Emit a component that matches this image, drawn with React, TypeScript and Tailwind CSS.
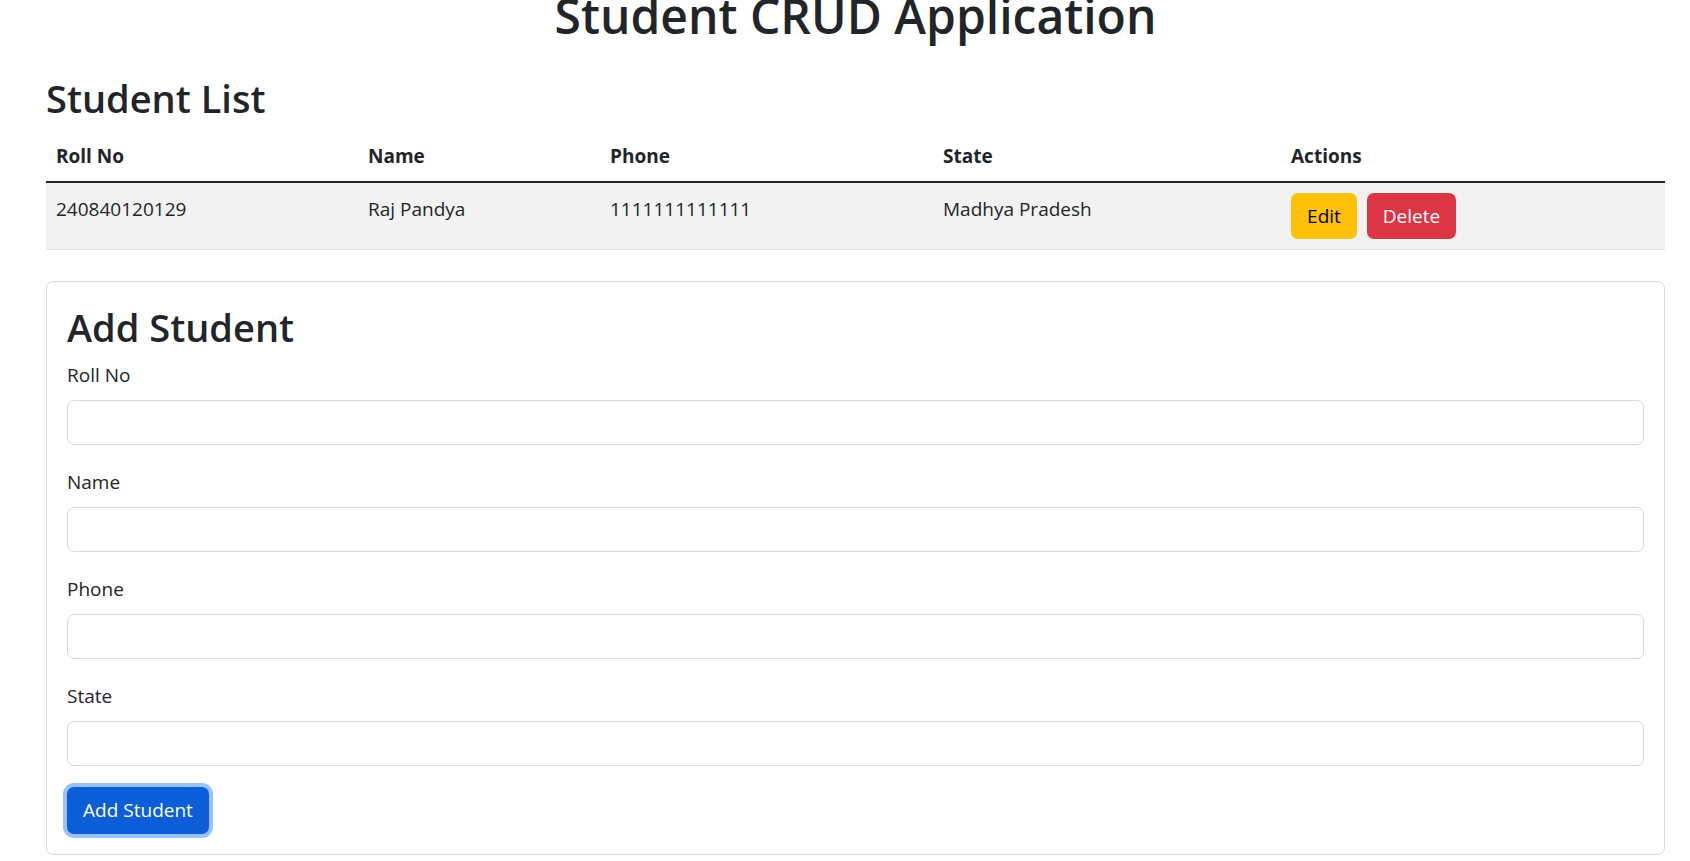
import { useState } from 'react';

type Student = {
  rollNo: string;
  name: string;
  phone: string;
  state: string;
};

const fields: { key: keyof Student; label: string }[] = [
  { key: 'rollNo', label: 'Roll No' },
  { key: 'name', label: 'Name' },
  { key: 'phone', label: 'Phone' },
  { key: 'state', label: 'State' },
];

const emptyForm: Student = { rollNo: '', name: '', phone: '', state: '' };

export default function App() {
  const [students, setStudents] = useState<Student[]>([
    { rollNo: '240840120129', name: 'Raj Pandya', phone: '1111111111111', state: 'Madhya Pradesh' },
  ]);
  const [form, setForm] = useState<Student>(emptyForm);

  const handleAdd = () => {
    if (!form.rollNo) return;
    setStudents((prev) => [...prev, form]);
    setForm(emptyForm);
  };

  const handleDelete = (rollNo: string) => {
    setStudents((prev) => prev.filter((s) => s.rollNo !== rollNo));
  };

  return (
    <div className="min-h-screen bg-white pl-[46px] pr-[25px] text-[#212529] text-[19px] font-['Open_Sans',sans-serif] overflow-hidden">
      <h1 className="-mt-[13px] text-center text-[48px] leading-[58px] font-semibold">Student CRUD Application</h1>

      {/* Student table */}
      <h2 className="mt-[30px] text-[38px] leading-[46px] font-semibold">Student List</h2>
      <table className="mt-[11px] w-full table-fixed border-collapse text-left">
        <thead>
          <tr className="border-b-2 border-[#212529]">
            <th className="w-[312px] px-[10px] pt-[10px] pb-[10px] leading-[29px] font-bold">Roll No</th>
            <th className="w-[242px] px-[10px] pt-[10px] pb-[10px] leading-[29px] font-bold">Name</th>
            <th className="w-[333px] px-[10px] pt-[10px] pb-[10px] leading-[29px] font-bold">Phone</th>
            <th className="w-[348px] px-[10px] pt-[10px] pb-[10px] leading-[29px] font-bold">State</th>
            <th className="px-[10px] pt-[10px] pb-[10px] leading-[29px] font-bold">Actions</th>
          </tr>
        </thead>
        <tbody>
          {students.map((s, i) => (
            <tr key={s.rollNo + i} className={`border-b border-[#dee2e6] ${i % 2 === 0 ? 'bg-[#f2f2f2]' : 'bg-white'}`}>
              <td className="px-[10px] pt-[12px] align-top leading-[29px]">{s.rollNo}</td>
              <td className="px-[10px] pt-[12px] align-top leading-[29px]">{s.name}</td>
              <td className="px-[10px] pt-[12px] align-top leading-[29px]">{s.phone}</td>
              <td className="px-[10px] pt-[12px] align-top leading-[29px]">{s.state}</td>
              <td className="px-[10px] py-[10px] align-top">
                <div className="flex gap-[10px]">
                  <button className="h-[46px] w-[66px] rounded-[7px] bg-[#ffc107] text-black">Edit</button>
                  <button
                    onClick={() => handleDelete(s.rollNo)}
                    className="h-[46px] w-[89px] rounded-[7px] bg-[#dc3545] text-white"
                  >
                    Delete
                  </button>
                </div>
              </td>
            </tr>
          ))}
        </tbody>
      </table>

      {/* Add form card */}
      <div className="mt-[31px] rounded-[7px] border border-[#d9d9d9] px-[20px] pt-[22px] pb-[20px]">
        <h2 className="text-[38px] leading-[46px] font-semibold">Add Student</h2>
        <div className="mt-[11px] flex flex-col gap-[23px]">
          {fields.map((f) => (
            <div key={f.key} className="flex flex-col">
              <label className="leading-[29px]">{f.label}</label>
              <input
                value={form[f.key]}
                onChange={(e) => setForm({ ...form, [f.key]: e.target.value })}
                className="mt-[10px] h-[45px] w-full rounded-[7px] border border-[#d6d9dc] bg-white px-[14px] outline-none"
              />
            </div>
          ))}
        </div>
        <button
          onClick={handleAdd}
          className="mt-[21px] h-[47px] w-[142px] rounded-[7px] bg-[#0b5ed7] text-white ring-[4px] ring-[#98c1fe]"
        >
          Add Student
        </button>
      </div>
    </div>
  );
}
